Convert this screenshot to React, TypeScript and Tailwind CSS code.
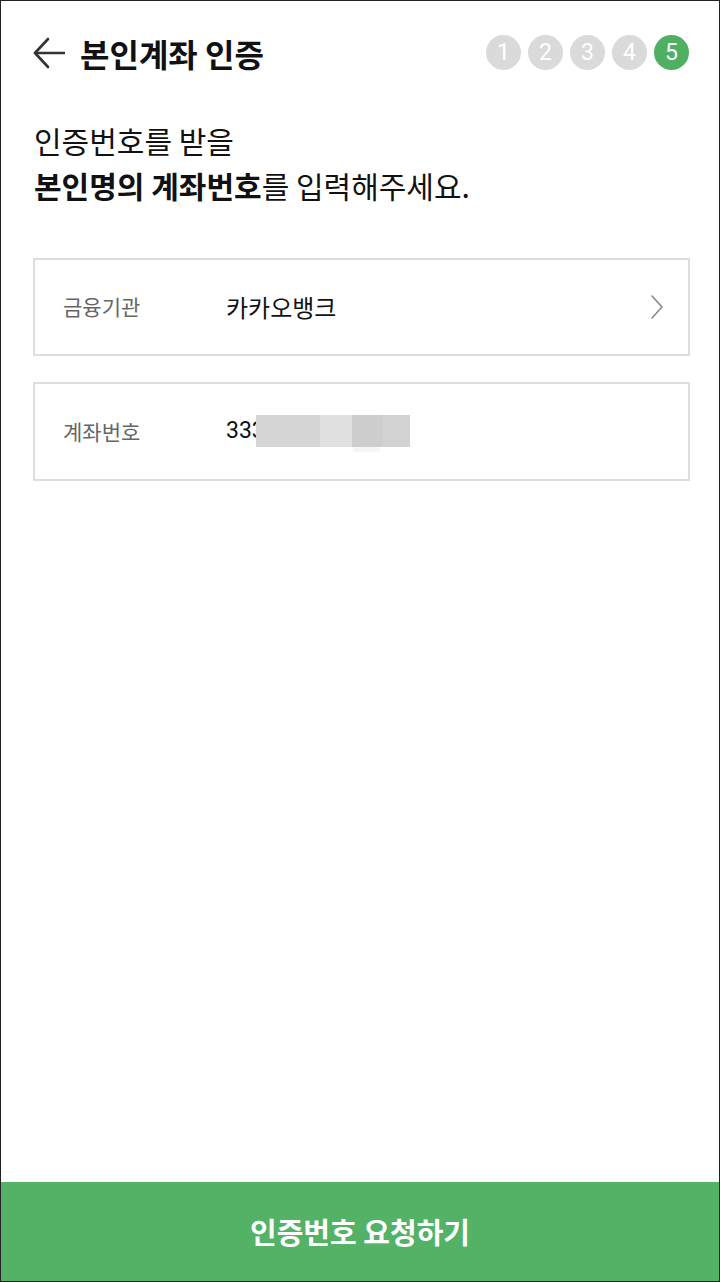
import React from "react";

const KR = { fontFamily: '"Noto Sans CJK KR", "Noto Sans", sans-serif' };

function Step({ n, active }: { n: number; active?: boolean }) {
  return (
    <div
      className={`w-[35px] h-[35px] rounded-full flex items-center justify-center text-white text-[23px] leading-none ${active ? "bg-[#4fb064]" : "bg-[#dadada]"}`}
      style={{ fontFamily: "Roboto, sans-serif" }}
    >
      {n}
    </div>
  );
}

export default function App() {
  return (
    <div className="w-[720px] h-[1282px] border border-[#222] bg-white flex flex-col overflow-hidden" style={KR}>
      <div className="h-[103px] flex items-center pl-[32px] pr-[30px]">
        <svg width="32" height="32" viewBox="0 0 32 32" fill="none" stroke="#333" strokeWidth="2.6" strokeLinecap="round" strokeLinejoin="round">
          <path d="M2 16 H31" />
          <path d="M15 2 L2 16 L15 30" />
        </svg>
        <div className="ml-[15px] text-[32px] font-bold text-[#111]">본인계좌 인증</div>
        <div className="ml-auto flex gap-[7px]">
          <Step n={1} />
          <Step n={2} />
          <Step n={3} />
          <Step n={4} />
          <Step n={5} active />
        </div>
      </div>

      <div className="mt-[14px] px-[33px] text-[30px] leading-[45px] text-[#111]">
        <div>인증번호를 받을</div>
        <div>
          <span className="font-bold">본인명의 계좌번호</span>를 입력해주세요.
        </div>
      </div>

      <div className="mt-[50px] ml-[32px] mr-[29px] flex flex-col gap-[26px]">
        <div className="h-[98px] border-2 border-[#dedede] flex items-center pl-[28px] pr-[24px]">
          <div className="w-[163px] text-[21px] text-[#666]">금융기관</div>
          <div className="text-[24px] text-[#111]">카카오뱅크</div>
          <svg className="ml-auto" width="14" height="26" viewBox="0 0 14 26" fill="none" stroke="#888" strokeWidth="1.6" strokeLinecap="round" strokeLinejoin="round">
            <path d="M2 2 L12 13 L2 24" />
          </svg>
        </div>
        <div className="h-[99px] border-2 border-[#dedede] flex items-center pl-[28px] pr-[24px]">
          <div className="w-[163px] text-[21px] text-[#666]">계좌번호</div>
          <div className="relative text-[23px] text-[#111]" style={{ fontFamily: "Roboto, sans-serif" }}>
            333
            <div className="absolute left-[30px] top-[1px] flex h-[32px]">
              <div className="w-[64px] bg-[#d5d5d5]" />
              <div className="w-[32px] bg-[#e1e1e1]" />
              <div className="w-[31px] bg-[#cdcdcd]" />
              <div className="w-[27px] bg-[#d3d3d3]" />
            </div>
            <div className="absolute left-[127px] top-[33px] w-[27px] h-[5px] bg-[#f6f6f6]" />
          </div>
        </div>
      </div>

      <div className="flex-1" />

      <div className="h-[99px] bg-[#53b266] flex items-center justify-center text-white text-[29px] font-bold">
        인증번호 요청하기
      </div>
    </div>
  );
}
